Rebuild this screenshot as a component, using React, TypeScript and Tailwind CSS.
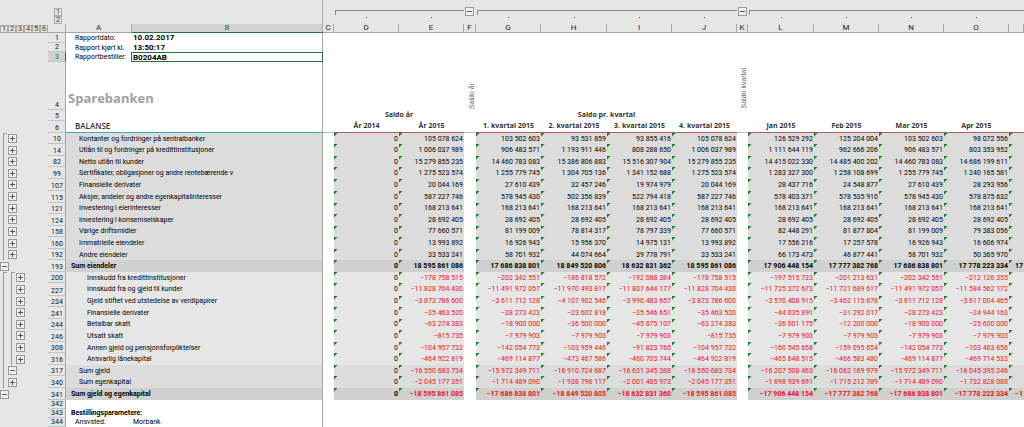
import { useState } from 'react'

type Tone = 'item' | 'debt' | 'total'
type Mark = 'start' | 'line' | 'plus' | 'minus'

interface Row {
  no: number
  label: string
  tone: Tone
  indent: string
  marks: Mark[]
  values: string[]
  rest?: string
}

const tones: Record<Tone, string> = {
  item: 'bg-[#dcdcdc]',
  debt: 'bg-[#e6e6e6]',
  total: 'bg-[#d0d0d0] font-bold',
}

// values: 2015, Q1, Q2, Q3, Q4, Jan, Feb, Mar, Apr
const rows: Row[] = [
  { no: 10, label: 'Kontanter og fordringer på sentralbanker', tone: 'item', indent: 'pl-[13px]', marks: ['start', 'plus'], values: ['105 078 624', '103 502 603', '93 531 859', '93 855 416', '105 078 624', '126 529 292', '125 204 004', '103 502 603', '98 072 556'] },
  { no: 14, label: 'Utlån til og fordringer på kredittinstitusjoner', tone: 'item', indent: 'pl-[13px]', marks: ['line', 'plus'], values: ['1 006 037 989', '906 483 571', '1 193 911 446', '808 288 650', '1 006 037 989', '1 111 644 119', '962 666 206', '906 483 571', '803 353 952'] },
  { no: 82, label: 'Netto utlån til kunder', tone: 'item', indent: 'pl-[13px]', marks: ['line', 'plus'], values: ['15 279 855 235', '14 460 783 083', '15 386 806 883', '15 516 307 904', '15 279 855 235', '14 415 022 330', '14 485 400 202', '14 460 783 083', '14 686 199 611'] },
  { no: 99, label: 'Sertifikater, obligasjoner og andre rentebærende v', tone: 'item', indent: 'pl-[13px]', marks: ['line', 'plus'], values: ['1 275 523 574', '1 255 779 745', '1 304 705 136', '1 341 152 688', '1 275 523 574', '1 283 327 300', '1 258 108 699', '1 255 779 745', '1 240 165 581'] },
  { no: 107, label: 'Finansielle derivater', tone: 'item', indent: 'pl-[13px]', marks: ['line', 'plus'], values: ['20 044 169', '27 610 439', '32 457 246', '19 974 979', '20 044 169', '28 437 716', '24 548 877', '27 610 439', '28 293 956'] },
  { no: 115, label: 'Aksjer, andeler og andre egenkapitalinteresser', tone: 'item', indent: 'pl-[13px]', marks: ['line', 'plus'], values: ['587 227 746', '578 945 430', '502 356 839', '522 794 418', '587 227 746', '578 403 371', '578 535 910', '578 945 430', '578 875 632'] },
  { no: 121, label: 'Investering i eierinteresser', tone: 'item', indent: 'pl-[13px]', marks: ['line', 'plus'], values: ['168 213 641', '168 213 641', '168 213 641', '168 213 641', '168 213 641', '168 213 641', '168 213 641', '168 213 641', '168 213 641'] },
  { no: 124, label: 'Investering i konsernselskaper', tone: 'item', indent: 'pl-[13px]', marks: ['line', 'plus'], values: ['28 692 405', '28 692 405', '28 692 405', '28 692 405', '28 692 405', '28 692 405', '28 692 405', '28 692 405', '28 692 405'] },
  { no: 158, label: 'Varige driftsmidler', tone: 'item', indent: 'pl-[13px]', marks: ['line', 'plus'], values: ['77 660 571', '81 199 009', '78 814 317', '78 797 339', '77 660 571', '82 448 291', '81 877 804', '81 199 009', '79 383 056'] },
  { no: 160, label: 'Immatrielle eiendeler', tone: 'item', indent: 'pl-[13px]', marks: ['line', 'plus'], values: ['13 993 892', '16 926 943', '15 956 370', '14 975 131', '13 993 892', '17 556 216', '17 257 578', '16 926 943', '16 606 974'] },
  { no: 192, label: 'Andre eiendeler', tone: 'item', indent: 'pl-[13px]', marks: ['line', 'plus'], values: ['33 533 241', '58 701 932', '44 074 664', '39 778 791', '33 533 241', '66 173 473', '46 877 441', '58 701 932', '50 365 970'] },
  { no: 193, label: 'Sum eiendeler', tone: 'total', indent: 'pl-[5px]', marks: ['minus'], values: ['18 595 861 086', '17 686 838 801', '18 849 520 806', '18 632 831 362', '18 595 861 086', '17 906 448 154', '17 777 382 768', '17 686 838 801', '17 778 223 334'], rest: '17' },
  { no: 200, label: 'Innskudd fra kredittinstitusjoner', tone: 'debt', indent: 'pl-[21px]', marks: ['start', 'start', 'plus'], values: ['-178 758 515', '-202 342 551', '-186 818 572', '-192 088 384', '-178 758 515', '-197 515 733', '-201 213 631', '-202 342 551', '-212 126 355'] },
  { no: 227, label: 'Innskudd fra og gjeld til kunder', tone: 'debt', indent: 'pl-[21px]', marks: ['line', 'line', 'plus'], values: ['-11 828 704 430', '-11 491 972 057', '-11 970 493 817', '-11 807 644 177', '-11 828 704 430', '-11 725 372 673', '-11 721 689 617', '-11 491 972 057', '-11 584 562 172'] },
  { no: 234, label: 'Gjeld stiftet ved utstedelse av verdipapirer', tone: 'debt', indent: 'pl-[21px]', marks: ['line', 'line', 'plus'], values: ['-3 873 786 600', '-3 611 712 128', '-4 107 902 546', '-3 990 483 657', '-3 873 786 600', '-3 570 408 915', '-3 462 115 678', '-3 611 712 128', '-3 617 004 465'] },
  { no: 241, label: 'Finansielle derivater', tone: 'debt', indent: 'pl-[21px]', marks: ['line', 'line', 'plus'], values: ['-35 463 520', '-28 273 423', '-23 602 818', '-35 546 651', '-35 463 520', '-44 035 891', '-31 292 017', '-28 273 423', '-24 944 163'] },
  { no: 244, label: 'Betalbar skatt', tone: 'debt', indent: 'pl-[21px]', marks: ['line', 'line', 'plus'], values: ['-63 274 383', '-18 900 000', '-36 500 000', '-45 075 107', '-63 274 383', '-36 001 175', '-12 200 000', '-18 900 000', '-25 600 000'] },
  { no: 246, label: 'Utsatt skatt', tone: 'debt', indent: 'pl-[21px]', marks: ['line', 'line', 'plus'], values: ['-815 735', '-7 979 903', '-7 979 903', '-7 979 903', '-815 735', '-7 979 903', '-7 979 903', '-7 979 903', '-7 979 903'] },
  { no: 308, label: 'Annen gjeld og pensjonsforpliktelser', tone: 'debt', indent: 'pl-[21px]', marks: ['line', 'line', 'plus'], values: ['-104 957 732', '-142 054 773', '-103 959 446', '-91 823 765', '-104 957 732', '-160 545 658', '-159 095 654', '-142 054 773', '-103 463 656'] },
  { no: 316, label: 'Ansvarlig lånekapital', tone: 'debt', indent: 'pl-[21px]', marks: ['line', 'line', 'plus'], values: ['-464 922 819', '-469 114 877', '-473 467 586', '-460 703 744', '-464 922 819', '-465 648 515', '-466 583 480', '-469 114 877', '-469 714 533'] },
  { no: 317, label: 'Sum gjeld', tone: 'item', indent: 'pl-[13px]', marks: ['line', 'minus'], values: ['-16 550 683 734', '-15 972 349 711', '-16 910 724 687', '-16 631 345 388', '-16 550 683 734', '-16 207 508 463', '-16 062 169 979', '-15 972 349 711', '-16 045 395 246'] },
  { no: 340, label: 'Sum egenkapital', tone: 'item', indent: 'pl-[13px]', marks: ['line', 'plus'], values: ['-2 045 177 351', '-1 714 489 090', '-1 938 796 117', '-2 001 485 973', '-2 045 177 351', '-1 698 939 691', '-1 715 212 789', '-1 714 489 090', '-1 732 828 088'] },
  { no: 341, label: 'Sum gjeld og egenkapital', tone: 'total', indent: 'pl-[5px]', marks: ['minus'], values: ['-18 595 861 085', '-17 686 838 801', '-18 849 520 805', '-18 632 831 360', '-18 595 861 085', '-17 906 448 154', '-17 777 382 768', '-17 686 838 801', '-17 778 223 334'], rest: '-1' },
]

const columnWidths = [
  'w-[48px]', 'w-[18px]', 'w-[65px]', 'w-[192px]', 'w-[11px]',
  'w-[65px]', 'w-[65px]', 'w-[12px]',
  'w-[65px]', 'w-[66px]', 'w-[65px]', 'w-[65px]', 'w-[11px]',
  'w-[66px]', 'w-[65px]', 'w-[65px]', 'w-[65px]', '',
]

const letters = ['C', 'D', 'E', 'F', 'G', 'H', 'I', 'J', 'K', 'L', 'M', 'N', 'O', '']
const periods = ['År 2014', 'År 2015', '', '1. kvartal 2015', '2. kvartal 2015', '3. kvartal 2015', '4. kvartal 2015', '', 'Jan 2015', 'Feb 2015', 'Mar 2015', 'Apr 2015', '']

function Toggle({ open, label }: { open: boolean; label: string }) {
  return (
    <button type="button" aria-label={label} className="block size-[9px] shrink-0">
      <svg viewBox="0 0 9 9" className="block size-[9px]" fill="none" stroke="#999">
        <rect x="0.5" y="0.5" width="8" height="8" fill="#efefef" />
        <path d={open ? 'M2 4.5h5' : 'M2 4.5h5M4.5 2v5'} stroke="#555" />
      </svg>
    </button>
  )
}

function LevelButton({ level }: { level: number }) {
  return (
    <button type="button" className="flex size-[8px] items-center justify-center border border-[#a8a8a8] text-[8px] leading-none text-[#444]">
      {level}
    </button>
  )
}

function OutlineMarks({ marks, label }: { marks: Mark[]; label: string }) {
  return (
    <div className="flex h-full items-center">
      {marks.map((mark, i) => (
        <div key={i} className="flex h-full w-2 items-center">
          {(mark === 'plus' || mark === 'minus') && <Toggle open={mark === 'minus'} label={label} />}
          {(mark === 'line' || mark === 'start') && (
            <div className={`ml-[3px] h-full w-1 border-l border-[#999] ${mark === 'start' ? 'border-t' : ''}`} />
          )}
        </div>
      ))}
    </div>
  )
}

function RowNumber({ no, active }: { no: number; active?: boolean }) {
  return (
    <th
      scope="row"
      className={`border-r border-b border-b-[#c4c4c4] p-0 pl-px text-center align-bottom font-normal ${
        active ? 'border-r-[#217346] bg-[#d2d2d2] text-[#217346]' : 'border-r-[#a6a6a6] bg-[#e6e6e6] text-[#111]'
      }`}
    >
      {no}
    </th>
  )
}

function AmountCell({ value, className }: { value: string; className: string }) {
  return (
    <td
      className={`bg-[linear-gradient(135deg,#16801f_2px,transparent_3px)] p-0 pr-px text-right ${className} ${
        value.startsWith('-') ? 'text-[#f0101c]' : 'text-black'
      }`}
    >
      {value.replace('-', '−')}
    </td>
  )
}

function ReportRow({ row }: { row: Row }) {
  const tone = tones[row.tone]
  const amounts = ['0', ...row.values]

  return (
    <tr className="odd:h-[11px] even:h-[12px]">
      <td className="h-px bg-[#e6e6e6] p-0">
        <OutlineMarks marks={row.marks} label={row.label} />
      </td>
      <RowNumber no={row.no} />
      <td colSpan={2} className={`border-r border-[#a6a6a6] p-0 ${row.indent} ${tone}`}>
        {row.label}
      </td>
      <td className="p-0" />
      {amounts.slice(0, 2).map((v, i) => <AmountCell key={i} value={v} className={tone} />)}
      <td className="p-0" />
      {amounts.slice(2, 6).map((v, i) => <AmountCell key={i} value={v} className={tone} />)}
      <td className="p-0" />
      {amounts.slice(6).map((v, i) => <AmountCell key={i} value={v} className={tone} />)}
      <td className={`bg-[linear-gradient(135deg,#16801f_2px,transparent_3px)] p-0 pl-1.5 ${tone} ${row.rest?.startsWith('-') ? 'text-[#f0101c]' : ''}`}>
        {row.rest?.replace('-', '−')}
      </td>
    </tr>
  )
}

function ColumnHeaders() {
  return (
    <thead className="bg-[#e6e6e6] text-[8px] text-[#222]">
      <tr className="h-[16px]">
        <td className="p-0" />
        <td className="p-0 pl-1.5 align-bottom"><LevelButton level={1} /></td>
        <td colSpan={2} className="border-r border-[#a6a6a6] p-0" />
        <td className="p-0" />
        <td colSpan={2} className="p-0 pb-px pl-px align-bottom"><div className="h-[5px] border-t border-l border-[#8a8a8a]" /></td>
        <td className="p-0 pl-px align-bottom"><Toggle open label="Saldo år" /></td>
        <td colSpan={4} className="p-0 pb-px pl-px align-bottom"><div className="h-[5px] border-t border-l border-[#8a8a8a]" /></td>
        <td className="p-0 pl-px align-bottom"><Toggle open label="Saldo pr. kvartal" /></td>
        <td colSpan={5} className="p-0 pb-px pl-px align-bottom"><div className="h-[5px] border-t border-l border-[#8a8a8a]" /></td>
      </tr>
      <tr className="h-[8px]">
        <td className="p-0" />
        <td className="p-0 pl-1.5"><LevelButton level={2} /></td>
        <td colSpan={2} className="border-r border-[#a6a6a6] p-0" />
        {letters.map((letter, i) => (
          <td key={i} className="p-0 align-top">
            {letter !== '' && !'CFK'.includes(letter) && <div className="mx-auto mt-px size-px bg-[#555]" />}
          </td>
        ))}
      </tr>
      <tr className="h-[9px]">
        <td className="p-0">
          <div className="flex">
            {[1, 2, 3, 4, 5, 6].map(level => <LevelButton key={level} level={level} />)}
          </div>
        </td>
        <th className="border-r border-b border-[#a6a6a6] p-0" />
        <th scope="col" className="border-b border-[#a6a6a6] p-0 font-normal">A</th>
        <th scope="col" className="border-r border-b border-l border-x-[#a6a6a6] border-b-[#217346] bg-[#d2d2d2] p-0 font-normal text-[#217346]">B</th>
        {letters.map((letter, i) => (
          <th key={i} scope="col" className="border-r border-b border-[#a6a6a6] p-0 font-normal">{letter}</th>
        ))}
      </tr>
    </thead>
  )
}

export default function App() {
  const [orderedBy, setOrderedBy] = useState('B0204AB')

  return (
    <main className="h-screen overflow-hidden bg-white font-[Roboto,sans-serif] text-[7px] leading-[8px] text-black">
      <table className="h-screen w-full table-fixed border-separate border-spacing-0 whitespace-nowrap">
        <colgroup>
          {columnWidths.map((width, i) => <col key={i} className={width} />)}
        </colgroup>
        <ColumnHeaders />
        <tbody>
          <tr className="h-[10px]">
            <td className="bg-[#e6e6e6] p-0" />
            <RowNumber no={1} />
            <td className="p-0 pl-[9px]">Rapportdato:</td>
            <td className="border-r border-[#a6a6a6] p-0 pl-0.5 text-[8px] font-bold">10.02.2017</td>
            <td colSpan={14} className="p-0" />
          </tr>
          <tr className="h-[9px]">
            <td className="bg-[#e6e6e6] p-0" />
            <RowNumber no={2} />
            <td className="p-0 pl-[9px]">Rapport kjørt kl.</td>
            <td className="border-r border-[#a6a6a6] p-0 pl-0.5 text-[8px] font-bold">13:50:17</td>
            <td colSpan={14} className="p-0" />
          </tr>
          <tr className="h-[10px]">
            <td className="bg-[#e6e6e6] p-0" />
            <RowNumber no={3} active />
            <td className="p-0 pl-[9px]"><label htmlFor="ordered-by">Rapportbestiller:</label></td>
            <td className="p-0">
              <input
                id="ordered-by"
                value={orderedBy}
                onChange={e => setOrderedBy(e.target.value)}
                className="block h-[10px] w-full border border-[#217346] bg-white pl-px text-[8px] leading-[8px] font-bold outline-none"
              />
            </td>
            <td colSpan={14} className="p-0" />
          </tr>
          <tr className="h-[47px]">
            <td className="bg-[#e6e6e6] p-0" />
            <RowNumber no={4} />
            <td colSpan={2} className="border-r border-[#a6a6a6] p-0 pb-1 pl-0.5 align-bottom">
              <h1 className="font-['Open_Sans'] text-[13px] leading-[16px] font-bold text-[#a0a0a0]">Sparebanken</h1>
            </td>
            <td colSpan={3} className="p-0" />
            <td className="p-0 pb-px align-bottom text-[#666]">
              <span className="ml-auto block w-fit rotate-180 font-['Liberation_Sans'] [writing-mode:vertical-rl]">Saldo år</span>
            </td>
            <td colSpan={4} className="p-0" />
            <td className="p-0 pb-px align-bottom text-[#666]">
              <span className="ml-auto block w-fit rotate-180 font-['Liberation_Sans'] [writing-mode:vertical-rl]">Saldo kvartal</span>
            </td>
            <td colSpan={5} className="p-0" />
          </tr>
          <tr className="h-[11px] text-[#333]">
            <td className="bg-[#e6e6e6] p-0" />
            <RowNumber no={5} />
            <td colSpan={2} className="border-r border-[#a6a6a6] p-0" />
            <td className="p-0" />
            <th colSpan={2} className="p-0 font-['Open_Sans'] font-bold">Saldo år</th>
            <td className="p-0" />
            <th colSpan={4} className="p-0 font-['Open_Sans'] font-bold">Saldo pr. kvartal</th>
            <td colSpan={6} className="p-0" />
          </tr>
          <tr className="h-[12px] text-[#333]">
            <td className="bg-[#e6e6e6] p-0" />
            <RowNumber no={6} />
            <th colSpan={2} className="border-r border-b border-r-[#a6a6a6] border-b-[#35aeb8] p-0 pl-[9px] text-left font-['Open_Sans'] text-[8px] font-semibold">BALANSE</th>
            <td className="border-b border-[#bbb] p-0" />
            {periods.map((period, i) => (
              <th key={i} scope="col" className={`border-b p-0 font-['Open_Sans'] font-bold ${i === 2 || i === 7 ? 'border-[#bbb]' : 'border-[#a8605c]'}`}>
                {period}
              </th>
            ))}
          </tr>
        </tbody>
        <tbody>
          {rows.map(row => <ReportRow key={row.no} row={row} />)}
        </tbody>
        <tbody>
          <tr className="h-[9px]">
            <td className="bg-[#e6e6e6] p-0" />
            <RowNumber no={342} />
            <td colSpan={2} className="border-r border-[#a6a6a6] p-0" />
            <td colSpan={14} className="p-0" />
          </tr>
          <tr className="h-[9px]">
            <td className="bg-[#e6e6e6] p-0" />
            <RowNumber no={343} />
            <td colSpan={2} className="border-r border-[#a6a6a6] p-0 pl-[5px] font-bold">Bestillingsparametere:</td>
            <td colSpan={14} className="p-0" />
          </tr>
          <tr className="h-[9px]">
            <td className="bg-[#e6e6e6] p-0" />
            <RowNumber no={344} />
            <td className="p-0 pl-[9px]">Ansvsted:</td>
            <td className="border-r border-[#a6a6a6] p-0 pl-0.5">Morbank</td>
            <td colSpan={14} className="p-0" />
          </tr>
          <tr>
            <td className="bg-[#e6e6e6] p-0" />
            <td className="border-r border-[#a6a6a6] bg-[#e6e6e6] p-0" />
            <td colSpan={2} className="border-r border-[#a6a6a6] p-0" />
            <td colSpan={14} className="p-0" />
          </tr>
        </tbody>
      </table>
    </main>
  )
}
